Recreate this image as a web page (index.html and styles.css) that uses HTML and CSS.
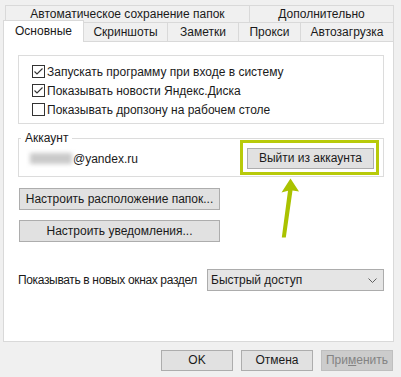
FILE: index.html
```html
<!DOCTYPE html>
<html lang="ru">
<head>
<meta charset="utf-8">
<link rel="stylesheet" href="styles.css">
</head>
<body>
<div class="dialog">
  <div class="tabs">
    <div class="tabrow row1">
      <div class="tab w-auto">Автоматическое сохранение папок</div>
      <div class="tab w-extra">Дополнительно</div>
    </div>
    <div class="tabrow row2">
      <div class="tab active w-main">Основные</div>
      <div class="tab w-shots">Скриншоты</div>
      <div class="tab w-notes">Заметки</div>
      <div class="tab w-proxy">Прокси</div>
      <div class="tab w-start">Автозагрузка</div>
    </div>
  </div>

  <div class="panel">
    <div class="group options">
      <div class="check"><span class="box"><svg viewBox="0 0 11 11" width="11" height="11"><path d="M1.5 5.5 L4 8 L9.5 2.5" fill="none" stroke="#333" stroke-width="1.1"/></svg></span>Запускать программу при входе в систему</div>
      <div class="check"><span class="box"><svg viewBox="0 0 11 11" width="11" height="11"><path d="M1.5 5.5 L4 8 L9.5 2.5" fill="none" stroke="#333" stroke-width="1.1"/></svg></span>Показывать новости Яндекс.Диска</div>
      <div class="check"><span class="box"></span>Показывать дропзону на рабочем столе</div>
    </div>

    <fieldset class="account">
      <legend>Аккаунт</legend>
      <div class="account-row">
        <span class="email"><span class="blur"></span>@yandex.ru</span>
        <span class="highlight"><button class="btn logout">Выйти из аккаунта</button></span>
      </div>
    </fieldset>

    <button class="btn wide first">Настроить расположение папок...</button>
    <button class="btn wide second">Настроить уведомления...</button>

    <div class="section-row">
      <span class="section-label">Показывать в новых окнах раздел</span>
      <div class="select">
        <span>Быстрый доступ</span>
        <svg viewBox="0 0 9 5" width="9" height="5"><path d="M0.5 0.5 L4.5 4.5 L8.5 0.5" fill="none" stroke="#606060" stroke-width="1"/></svg>
      </div>
    </div>
  </div>

  <div class="footer">
    <button class="btn foot">OK</button>
    <button class="btn foot">Отмена</button>
    <button class="btn foot disabled">При<u>м</u>енить</button>
  </div>
</div>

<svg class="arrow" viewBox="0 0 401 377" width="401" height="377">
  <polygon points="290.5,178.5 299,191.5 292.5,190.5 285.8,237.5 281.8,237.5 288,190.8 281.5,192.5" fill="#aac200"/>
</svg>
</body>
</html>
```

FILE: styles.css
```css
* {
  box-sizing: border-box;
}

html,
body {
  margin: 0;
  padding: 0;
}

body {
  width: 401px;
  height: 377px;
  overflow: hidden;
  position: relative;
  background: #f0f0f0;
  color: #1a1a1a;
  font-family: "Segoe UI", "Liberation Sans", Arial, sans-serif;
  font-size: 12px;
}

/* ---------- tabs ---------- */
.tabs {
  padding-top: 5px;
}

.tabrow {
  display: flex;
  padding-left: 5px;
}

.row1 {
  height: 17px;
}

.row2 {
  height: 19px;
}

.tab {
  border: 1px solid #d9d9d9;
  border-bottom: none;
  background: #f0f0f0;
  text-align: center;
  white-space: nowrap;
}

.tab + .tab {
  margin-left: -1px;
}

.row1 .tab {
  height: 17px;
  line-height: 16px;
}

.row2 .tab {
  height: 19px;
  line-height: 18px;
}

.row2 .tab.active {
  position: relative;
  z-index: 1;
  margin-top: -2px;
  margin-left: -2px;
  height: 22px;
  line-height: 21px;
  background: #fff;
}

.w-auto { width: 245px; }
.w-extra { width: 145px; }
.w-main { width: 81px; }
.w-shots { width: 85px; }
.w-notes { width: 72px; }
.w-proxy { width: 63px; }
.w-start { width: 94px; }

/* ---------- panel ---------- */
.panel {
  margin-left: 3px;
  width: 391px;
  height: 301px;
  border: 1px solid #d9d9d9;
  background: #fff;
  padding: 13px 0 0 14px;
}

.group {
  border: 1px solid #dcdcdc;
}

.options {
  width: 366px;
  height: 69px;
  padding: 6px 0 0 13px;
}

.check {
  display: flex;
  align-items: center;
  gap: 2px;
  height: 19px;
  white-space: nowrap;
}

.box {
  width: 13px;
  height: 13px;
  border: 1px solid #333;
  background: #fff;
  flex: none;
  display: flex;
}

.box svg {
  display: block;
}

/* ---------- account ---------- */
.account {
  margin: 7px 0 0 0;
  padding: 0;
  width: 366px;
  min-width: 0;
  border: 1px solid #dcdcdc;
}

.account legend {
  margin-left: 2px;
  padding: 0 4px;
  line-height: 15px;
}

.account-row {
  display: flex;
  align-items: center;
  justify-content: space-between;
  padding: 2px 9px 7px 11px;
}

.email {
  display: flex;
  align-items: center;
}

.blur {
  width: 42px;
  height: 11px;
  margin-right: 1px;
  background: #cacaca;
  filter: blur(2px);
}

.highlight {
  position: relative;
  display: block;
}

.highlight::after {
  content: "";
  position: absolute;
  left: -7px;
  right: -5px;
  top: -8px;
  bottom: -6px;
  border: 3px solid #b8ca0a;
  pointer-events: none;
}

/* ---------- buttons ---------- */
.btn {
  display: block;
  margin: 0;
  padding: 0;
  height: 21px;
  border: 1px solid #adadad;
  background: #e1e1e1;
  color: #1a1a1a;
  font-family: inherit;
  font-size: 12px;
  text-align: center;
  line-height: 19px;
  white-space: nowrap;
}

.logout {
  width: 127px;
}

.wide {
  width: 201px;
  height: 22px;
  margin-left: 1px;
  line-height: 20px;
}

.wide.first {
  margin-top: 11px;
}

.wide.second {
  margin-top: 10px;
}

/* ---------- select row ---------- */
.section-row {
  width: 366px;
  margin-top: 27px;
  display: flex;
  align-items: center;
  justify-content: space-between;
}

.section-label {
  white-space: nowrap;
  letter-spacing: -0.35px;
}

.select {
  width: 177px;
  height: 22px;
  flex: none;
  border: 1px solid #acacac;
  background: #e5e5e5;
  display: flex;
  align-items: center;
  justify-content: space-between;
  padding: 0 6px 0 3px;
}

.select svg {
  display: block;
}

/* ---------- footer ---------- */
.footer {
  display: flex;
  justify-content: flex-end;
  gap: 8px;
  padding: 8px 8px 0 0;
}

.foot {
  width: 72px;
}

.disabled {
  background: #cccccc;
  border-color: #bfbfbf;
  color: #838383;
}

/* ---------- annotation ---------- */
.arrow {
  position: absolute;
  left: 0;
  top: 0;
  pointer-events: none;
}
```
